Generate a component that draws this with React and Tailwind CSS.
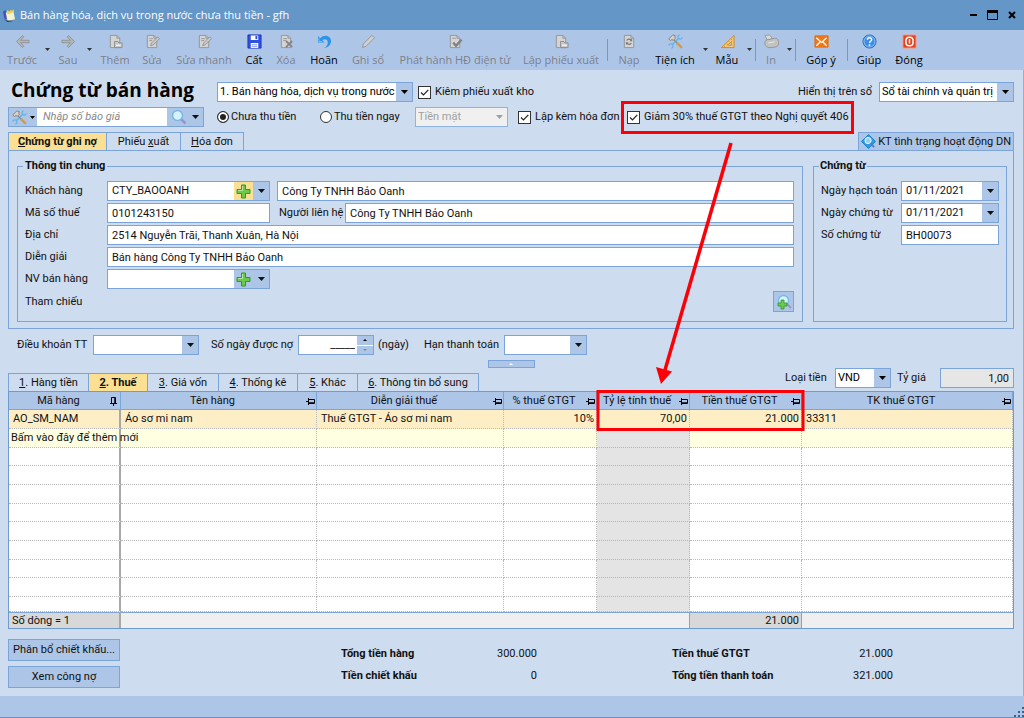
import React, { useState } from 'react';
import clsx from 'clsx';

const Caret = ({ className = '' }) => (
  <svg viewBox="0 0 7 4" className={clsx('w-[7px] h-1 shrink-0', className)} fill="currentColor">
    <path d="M0 0h7L3.5 4z" />
  </svg>
);

const Select = ({ value, className, disabled, id, label }) => (
  <div className={clsx('relative h-5 border', disabled ? 'border-[#8fb3e0] bg-[#f0f0f0]' : 'border-[#7ba4d9] bg-white', className)}>
    <select
      id={id}
      aria-label={label}
      disabled={disabled}
      className={clsx('appearance-none block w-full h-full pl-[2px] pr-4 bg-transparent outline-none text-[11px]', disabled ? 'text-[#a0a0a0]' : 'text-black')}
    >
      <option>{value}</option>
    </select>
    <span className={clsx('absolute right-0 top-0 h-full w-4 flex items-center justify-center pointer-events-none', disabled ? 'text-[#a0a0a0]' : 'bg-[#adc6e8] text-black')}>
      <Caret />
    </span>
  </div>
);

const TextInput = ({ value, className, ...rest }) => (
  <input
    type="text"
    defaultValue={value}
    className={clsx('h-5 min-w-0 border border-[#7ba4d9] bg-white px-1 text-[11px] outline-none', className)}
    {...rest}
  />
);

const PlusIcon = () => (
  <svg viewBox="0 0 15 15" className="w-[15px] h-[15px]">
    <path d="M5.500 1h4v4.500h4.500v4h-4.500v4.500h-4v-4.500h-4.500v-4h4.500z" fill="#6cc94c" stroke="#2d9a24" />
    <path d="M6.500 2v4.500h-4.500" fill="none" stroke="#b5eb9c" />
  </svg>
);

const Combo = ({ id, value, plus, active, label, className }) => (
  <div className={clsx('flex h-5 border border-[#7ba4d9] bg-white', className)}>
    <input id={id} type="text" aria-label={label} defaultValue={value} className="flex-1 min-w-0 px-1 text-[11px] outline-none" />
    {plus && (
      <button aria-label="+" className={clsx('w-[19px] flex items-center justify-center', active ? 'bg-[#fbdf92]' : 'bg-[#adc6e8]')}>
        <PlusIcon />
      </button>
    )}
    <button aria-label="▾" className="w-4 bg-[#adc6e8] flex items-center justify-center"><Caret /></button>
  </div>
);

const Check = ({ children, className }) => (
  <label className={clsx('flex items-center gap-1 whitespace-nowrap', className)}>
    <span className="relative flex">
      <input type="checkbox" defaultChecked className="peer appearance-none w-[13px] h-[13px] border border-[#333] bg-white" />
      <svg viewBox="0 0 13 13" className="absolute inset-0 w-[13px] h-[13px] hidden peer-checked:block pointer-events-none" fill="none" stroke="#222" strokeWidth="1.2">
        <path d="M3 6.500l2.500 2.500L10.300 3.800" />
      </svg>
    </span>
    {children}
  </label>
);

const Radio = ({ children, checked, className }) => (
  <label className={clsx('flex items-center gap-[2px] whitespace-nowrap', className)}>
    <input
      type="radio"
      name="payment"
      defaultChecked={checked}
      className="appearance-none w-3 h-3 rounded-full border border-[#333] bg-white checked:bg-[#222] checked:shadow-[inset_0_0_0_2px_white]"
    />
    {children}
  </label>
);

/* ---------- toolbar icons ---------- */

const Page = ({ children, fill = '#d4d4d4', stroke = '#949494' }) => (
  <>
    <path d="M2.500 1.500h7l3 3v10h-10z" fill={fill} stroke={stroke} />
    <path d="M9.500 1.500v3h3" fill="none" stroke={stroke} />
    {children}
  </>
);

const ToolsArt = () => (
  <>
    <path d="M4.500 11.500L11.500 4.500" stroke="#5fb2ec" strokeWidth="1.500" />
    <path d="M15.200 3.500a2.300 2.300 0 1 1-2.700-2.700M.8 12.500a2.300 2.300 0 1 1 2.700 2.700" fill="none" stroke="#5fb2ec" strokeWidth="1.300" />
    <path d="M10 10l4 4" stroke="#d99a3c" strokeWidth="2.600" strokeLinecap="round" />
    <path d="M5.500 5.500l4 4" stroke="#9c8a70" strokeWidth="1.400" />
    <path d="M.8 5.200L5.200 1l2.600.8-.6 1.400.5 1.500-2 2-1.500-.8-1.600 1z" fill="#d8d2c8" stroke="#77706a" strokeWidth=".8" />
  </>
);

const art = {
  back: <path d="M8 1.500L1.500 8 8 14.500 9.500 13 6 9.300h9V6.700H6L9.500 3z" fill="#b5b5b5" stroke="#8a8a8a" strokeWidth=".8" />,
  next: <path d="M8 1.500L14.500 8 8 14.500 6.500 13 10 9.300H1V6.700h9L6.500 3z" fill="#b5b5b5" stroke="#8a8a8a" strokeWidth=".8" />,
  add: <Page><path d="M7 8h3.500l1 1.500H15v5H7z" fill="#c9c9c9" stroke="#8d8d8d" /><path d="M8.500 12h5" stroke="#f2f2f2" strokeWidth="1.500" /></Page>,
  edit: <Page><path d="M4.500 5h4M4.500 7h3" stroke="#999" /><path d="M6 12.500l1-3L13.500 3l2 2L9 11.500z" fill="#c7c7c7" stroke="#8a8a8a" strokeWidth=".8" /></Page>,
  save: (
    <>
      <path d="M1 1h14v14H1z" fill="#3050e0" stroke="#1f35b5" />
      <path d="M4 1.500h8v5H4zM4 9.500h8V15H4z" fill="#fff" />
      <path d="M9 2h2v3.500H9z" fill="#3050e0" />
      <path d="M5 11.500h6M5 13.500h6" stroke="#7e91f0" />
    </>
  ),
  remove: <Page><path d="M4.500 5h4M4.500 7h3" stroke="#999" /><path d="M7.500 7.500l6.500 6.500M14 7.500L7.500 14" stroke="#858585" strokeWidth="2" /></Page>,
  undo: (
    <>
      <path d="M1 2v7h7L5.700 6.700C8 4.800 11.500 5.500 11.500 9c0 2.500-1.500 4.500-4 6 4-.6 7.500-3.200 7.500-7.300C15 2.500 8.500-.5 3.500 4.500z" fill="#2b94ea" />
      <path d="M2 4v4h3.500" fill="none" stroke="#7cc3fa" />
    </>
  ),
  pen: <path d="M1.500 14.500l1.200-4L11.500 1.500l3 2.500L5.500 13z" fill="#d0d0d0" stroke="#949494" />,
  issue: <Page><path d="M5.500 9l3 3.500 6-6.500" fill="none" stroke="#808080" strokeWidth="2.400" /><path d="M4.500 4.500h4" stroke="#999" /></Page>,
  reload: <Page><path d="M5 7c1-2 4-2 5 0M10 9.500c-1 2-4 2-5 0" fill="none" stroke="#777" strokeWidth="1.200" /><path d="M10.800 4.800v3H8zM4.200 11.800v-3H7z" fill="#777" /></Page>,
  tools: <ToolsArt />,
  ruler: (
    <>
      <path d="M15 1.500v13H1.500z" fill="#f7c56a" stroke="#d08a2a" />
      <path d="M12.300 8v4H8.200z" fill="#adc6e8" stroke="#d08a2a" strokeWidth=".8" />
      <path d="M4.500 13l1 1M7 10.500l1 1M9.500 8l1 1M12 5.500l1 1" stroke="#b87420" strokeWidth=".7" />
    </>
  ),
  print: (
    <>
      <path d="M1 1.500l5-.5 3 4-5.500 1.500z" fill="#d9d9d9" stroke="#9a9a9a" />
      <path d="M1 9c0-2.200 2-3 3.500-3l7-1.500c2.200 0 4 1.500 4 3.500v2.500c0 2-2 3.300-4 3.500l-5 .6c-3 0-5.500-1.800-5.500-3.800z" fill="#c2c2c2" stroke="#949494" />
      <path d="M4.500 9.500l7-1.200" stroke="#e8e8e8" />
    </>
  ),
  mail: <><path d="M1 2h14v12H1z" fill="#f07818" stroke="#e06a0d" /><path d="M2.500 4L8 9l5.500-5M2.500 12.500l4-4M13.500 12.500l-4-4" fill="none" stroke="#fff" strokeWidth="1.300" /></>,
  help: <><circle cx="8" cy="8" r="7" fill="#3d8ee4" stroke="#2668b8" /><circle cx="8" cy="8" r="5.900" fill="none" stroke="#b9dcfb" strokeWidth=".7" /><path d="M5.800 6.200c0-3 4.600-2.800 4.500-.2 0 1.700-2.200 1.700-2.200 3.500M8 11v1.700" fill="none" stroke="#fff" strokeWidth="1.600" /></>,
  close: <><path d="M1 1h14v14H1z" fill="#e3431f" stroke="#f5a08d" /><rect x="4.200" y="3.500" width="7.600" height="9" rx="3.500" fill="none" stroke="#fff" strokeWidth="1.600" /><path d="M8 5.500v4.500" stroke="#fff" strokeWidth="1.600" /></>,
};

const tools = [
  { text: 'Trước', icon: 'back', off: true, w: 'w-[42px]', menu: true },
  { text: 'Sau', icon: 'next', off: true, w: 'w-[34px]', menu: true },
  { text: 'Thêm', icon: 'add', off: true, w: 'w-11' },
  { text: 'Sửa', icon: 'edit', off: true, w: 'w-[30px]' },
  { text: 'Sửa nhanh', icon: 'edit', off: true, w: 'w-[74px]' },
  { text: 'Cất', icon: 'save', w: 'w-[26px]' },
  { text: 'Xóa', icon: 'remove', off: true, w: 'w-[38px]' },
  { text: 'Hoãn', icon: 'undo', w: 'w-[38px]' },
  { text: 'Ghi sổ', icon: 'pen', off: true, w: 'w-[50px]' },
  { text: 'Phát hành HĐ điện tử', icon: 'issue', off: true, w: 'w-[124px]' },
  { text: 'Lập phiếu xuất', icon: 'add', off: true, w: 'w-[88px]', sep: true },
  { text: 'Nạp', icon: 'reload', off: true, w: 'w-10' },
  { text: 'Tiện ích', icon: 'tools', w: 'w-[52px]', menu: true },
  { text: 'Mẫu', icon: 'ruler', w: 'w-9', menu: true, sep: true },
  { text: 'In', icon: 'print', off: true, w: 'w-7', menu: true, sep: true },
  { text: 'Góp ý', icon: 'mail', w: 'w-12', sep: true },
  { text: 'Giúp', icon: 'help', w: 'w-10' },
  { text: 'Đóng', icon: 'close', w: 'w-10' },
];

const Toolbar = () => (
  <nav className="flex h-10 bg-[#adc6e8] pl-px font-['Open_Sans','Noto_Sans',sans-serif]">
    {tools.map(t => (
      <React.Fragment key={t.text}>
        <button disabled={t.off} className={clsx('flex flex-col items-center pt-1 whitespace-nowrap text-[11px]', t.w, t.off ? 'text-[#7d8088]' : 'text-black')}>
          <svg viewBox="0 0 16 16" className="w-[15px] h-[15px] shrink-0">{art[t.icon]}</svg>
          <span className="leading-4 mt-[3px]">{t.text}</span>
        </button>
        {t.menu && <span className="w-2 flex justify-center pt-[18px] text-[#333]"><svg viewBox="0 0 5 3" className="w-[5px] h-[3px]" fill="currentColor"><path d="M0 0h5L2.500 3z" /></svg></span>}
        {t.sep && <span className="w-1 flex justify-center py-[9px]"><i className="w-px bg-[#6d9bd6]" /></span>}
      </React.Fragment>
    ))}
  </nav>
);

const TitleBar = () => (
  <header className="flex items-center h-[30px] px-[3px] bg-[#6496c8] text-white font-['Open_Sans','Noto_Sans',sans-serif]">
    <svg viewBox="0 0 14 14" className="w-[13px] h-[13px] mr-1">
      <path d="M0 3l3-2 1 9-2 2z" fill="#4b4bc0" />
      <path d="M3 4l8-2 2 9-8 2z" fill="#f6f3d0" />
      <path d="M4 3l1-2 2 2 1-2 2 1 1-2 1 3-7 3z" fill="#f2d24a" />
      <path d="M2 12l9 1-6 1z" fill="#334" />
    </svg>
    <span className="flex-1 text-[11px]">Bán hàng hóa, dịch vụ trong nước chưa thu tiền - gfh</span>
    <div className="flex items-center gap-[9px] text-black mr-1">
      <button aria-label="–"><svg viewBox="0 0 10 10" className="w-[10px] h-[10px]"><path d="M2 5h7" stroke="currentColor" strokeWidth="2" /></svg></button>
      <button aria-label="□"><svg viewBox="0 0 11 10" className="w-[11px] h-[10px]"><path d="M.5 1v8.500h10V1" fill="none" stroke="currentColor" /><path d="M0 1.500h11" stroke="currentColor" strokeWidth="3" /></svg></button>
      <button aria-label="×"><svg viewBox="0 0 10 10" className="w-[10px] h-[10px]"><path d="M2 2l6 6M8 2L2 8" stroke="currentColor" strokeWidth="2" /></svg></button>
    </div>
  </header>
);

const Tab = ({ k, before = '', after, active, onClick, className }) => (
  <button
    onClick={onClick}
    className={clsx('h-[18px] border-t border-r border-[#7ba4d9] whitespace-nowrap', active ? 'bg-[#fbdf92] font-bold' : 'bg-[#cddcee]', className)}
  >
    {before}<u>{k}</u>{after}
  </button>
);

const Heading = () => (
  <section className="flex pt-3">
    <div className="w-[209px] shrink-0">
      <h1 className="h-5 pl-[3px] text-[19px] leading-4 font-bold text-black whitespace-nowrap font-['Open_Sans','Noto_Sans',sans-serif]">Chứng từ bán hàng</h1>
      <div className="mt-[5px] flex w-[196px] h-5 border border-[#7ba4d9] bg-[#adc6e8]">
        <button aria-label="Tiện ích" className="w-7 flex items-center justify-center gap-[3px]">
          <svg viewBox="0 0 16 16" className="w-[15px] h-[15px]"><ToolsArt /></svg>
          <svg viewBox="0 0 5 3" className="w-[5px] h-[3px]"><path d="M0 0h5L2.500 3z" /></svg>
        </button>
        <input type="text" aria-label="Nhập số báo giá" placeholder="Nhập số báo giá" className="flex-1 min-w-0 bg-white pl-[6px] text-[11px] italic outline-none placeholder:text-[#888]" />
        <button aria-label="Tìm" className="w-9 flex items-center justify-center gap-[5px]">
          <svg viewBox="0 0 16 16" className="w-4 h-4">
            <path d="M10 10l4.500 4.500" stroke="#9a95c9" strokeWidth="2.500" />
            <circle cx="6.500" cy="6.500" r="5" fill="#d8f2fd" stroke="#73b9e6" strokeWidth="1.500" />
          </svg>
          <Caret />
        </button>
      </div>
    </div>
    <div className="flex-1 min-w-0">
      <div className="flex items-center h-5">
        <Select label="Loại chứng từ" value="1. Bán hàng hóa, dịch vụ trong nước" className="w-[196px] mr-[5px]" />
        <Check>Kiêm phiếu xuất kho</Check>
        <label htmlFor="book" className="ml-auto mr-[7px]">Hiển thị trên sổ</label>
        <Select id="book" value="Sổ tài chính và quản trị" className="w-[135px]" />
      </div>
      <div className="flex items-center h-5 mt-[5px]">
        <Radio checked className="w-[103px]">Chưa thu tiền</Radio>
        <Radio className="w-[95px]">Thu tiền ngay</Radio>
        <Select disabled label="Hình thức" value="Tiền mặt" className="w-[93px] mr-[10px]" />
        <Check className="w-[103px]">Lập kèm hóa đơn</Check>
        <Check className="h-[33px] shrink-0 border-[3px] border-[#fb0007] pl-[3px] pr-[2px]">Giảm 30% thuế GTGT theo Nghị quyết 406</Check>
      </div>
    </div>
  </section>
);

const General = () => (
  <fieldset className="flex-1 min-w-0 border border-[#7ba4d9] pl-[7px] pr-2 pt-[7px] pb-[9px]">
    <legend className="ml-[-2px] px-[2px] font-bold leading-4">Thông tin chung</legend>
    <div className="grid grid-cols-[82px_1fr] items-center gap-y-[2px]">
      <label htmlFor="customer">Khách hàng</label>
      <div className="flex gap-[7px]">
        <Combo id="customer" value="CTY_BAOOANH" plus active className="w-[163px]" />
        <TextInput value="Công Ty TNHH Bảo Oanh" aria-label="Tên khách hàng" className="flex-1" />
      </div>
      <label htmlFor="tax">Mã số thuế</label>
      <div className="flex items-center">
        <TextInput id="tax" value="0101243150" className="w-[163px]" />
        <label htmlFor="contact" className="w-[75px] pl-[9px] whitespace-nowrap">Người liên hệ</label>
        <TextInput id="contact" value="Công Ty TNHH Bảo Oanh" className="flex-1" />
      </div>
      <label htmlFor="address">Địa chỉ</label>
      <TextInput id="address" value="2514 Nguyễn Trãi, Thanh Xuân, Hà Nội" />
      <label htmlFor="memo">Diễn giải</label>
      <TextInput id="memo" value="Bán hàng Công Ty TNHH Bảo Oanh" />
      <label htmlFor="seller">NV bán hàng</label>
      <Combo id="seller" value="" plus className="w-[163px]" />
      <span>Tham chiếu</span>
      <button aria-label="Tham chiếu" className="justify-self-end w-[21px] h-[21px] border border-[#7ba4d9] bg-[#adc6e8] flex items-center justify-center">
        <svg viewBox="0 0 16 16" className="w-4 h-4">
          <path d="M11 10l4 4" stroke="#9a95c9" strokeWidth="2" />
          <circle cx="7.500" cy="6.500" r="5" fill="#d8f2fd" stroke="#73b9e6" strokeWidth="1.300" />
          <path d="M5 6h3v3h3v3H8v3H5v-3H2V9h3z" fill="#6cc94c" stroke="#2d9a24" strokeWidth=".8" />
        </svg>
      </button>
    </div>
  </fieldset>
);

const Voucher = () => (
  <fieldset className="w-[192px] shrink-0 border border-[#7ba4d9] px-[7px] pt-[7px]">
    <legend className="ml-[-2px] px-px font-bold leading-4">Chứng từ</legend>
    <div className="grid grid-cols-[80px_98px] items-center gap-y-[2px]">
      <label htmlFor="posted">Ngày hạch toán</label>
      <Combo id="posted" value="01/11/2021" />
      <label htmlFor="dated">Ngày chứng từ</label>
      <Combo id="dated" value="01/11/2021" />
      <label htmlFor="number">Số chứng từ</label>
      <TextInput id="number" value="BH00073" />
    </div>
  </fieldset>
);

const Terms = () => (
  <section className="flex items-center h-5 mt-[6px] pl-[9px]">
    <label htmlFor="terms" className="w-[76px]">Điều khoản TT</label>
    <Combo id="terms" className="w-[106px] mr-3" />
    <label htmlFor="days" className="w-[87px]">Số ngày được nợ</label>
    <div className="flex w-[76px] h-5 border border-[#7ba4d9] bg-white">
      <input id="days" type="text" defaultValue="_____" className="flex-1 min-w-0 text-right pr-[2px] text-[11px] outline-none" />
      <div className="w-4 flex flex-col gap-px">
        <button aria-label="▴" className="flex-1 bg-[#adc6e8] flex items-center justify-center"><svg viewBox="0 0 4 2" className="w-1 h-[2px]"><path d="M0 2h4L2 0z" /></svg></button>
        <button aria-label="▾" className="flex-1 bg-[#adc6e8] flex items-center justify-center"><svg viewBox="0 0 4 2" className="w-1 h-[2px]"><path d="M0 0h4L2 2z" fill="#888" /></svg></button>
      </div>
    </div>
    <span className="w-[50px] pl-1">(ngày)</span>
    <label htmlFor="due" className="w-20">Hạn thanh toán</label>
    <Combo id="due" className="w-[83px]" />
  </section>
);

const Pin = ({ down }) => (
  <svg viewBox="0 0 9 9" className={clsx('absolute right-px top-[5px] w-[9px] h-[9px]', down && 'mr-px')} fill="none" stroke="#000">
    {down
      ? <><path d="M2.500 6V.5h4V6M1 6.500h7M4.500 7v2" /><path d="M6 1v5" strokeWidth="1.500" /></>
      : <><path d="M3 2.500h5.500v4H3M2.500 1v7M0 4.500h2" /><path d="M3 6h5" strokeWidth="1.500" /></>}
  </svg>
);

const columns = [
  { title: 'Mã hàng', w: 'w-28' },
  { title: 'Tên hàng', w: 'w-[196px]' },
  { title: 'Diễn giải thuế', w: 'w-[187px]' },
  { title: '% thuế GTGT', w: 'w-[93px]' },
  { title: 'Tỷ lệ tính thuế', w: 'w-[93px]' },
  { title: 'Tiền thuế GTGT', w: 'w-28' },
  { title: 'TK thuế GTGT', w: '' },
];

const item = ['AO_SM_NAM', 'Áo sơ mi nam', 'Thuế GTGT - Áo sơ mi nam', '10%', '70,00', '21.000', '33311'];

const cell = i => clsx(
  'border-b border-r border-dotted border-b-[#b8b8b8] p-0 whitespace-nowrap leading-4',
  i === 0 ? 'border-r-2 [border-right-style:solid] border-r-[#a8a8a8]' : 'border-r-[#b8b8b8]',
);

const Grid = () => (
  <table className="w-full table-fixed border-separate border-spacing-0 border border-[#6f9bd3] bg-white">
    <thead>
      <tr className="h-[18px]">
        {columns.map((c, i) => (
          <th key={c.title} className={clsx('relative p-0 pr-3 font-normal whitespace-nowrap leading-4 bg-[#adc6e8] border-r border-b border-[#7ba4d9]', c.w)}>
            {c.title}
            <Pin down={i === 0} />
          </th>
        ))}
      </tr>
    </thead>
    <tbody>
      <tr className="h-[19px] bg-[#feeec6]">
        {item.map((v, i) => (
          <td key={i} className={clsx(cell(i), i > 2 && i < 6 ? 'text-right pr-[2px]' : 'pl-1')}>{v}</td>
        ))}
      </tr>
      <tr className="h-[19px] bg-[#ffffe1]">
        {item.map((v, i) => (
          <td key={i} className={clsx(cell(i), i === 4 && 'bg-[#e4e4e4]')}>
            {i === 0 && <span className="pl-[2px]">Bấm vào đây để thêm mới</span>}
          </td>
        ))}
      </tr>
      {Array.from({ length: 9 }, (_, r) => (
        <tr key={r} className={clsx(r === 8 ? 'h-[15px]' : r % 3 === 0 ? 'h-[18px]' : 'h-[19px]')}>
          {columns.map((c, i) => <td key={i} className={clsx(cell(i), i === 4 && 'bg-[#e4e4e4]')} />)}
        </tr>
      ))}
    </tbody>
    <tfoot>
      <tr className="h-4 bg-[#efefef]">
        <td className="p-0 pl-[3px] leading-[15px] bg-[#d8d8d8] border-t border-[#7ba4d9] border-r-2 border-r-[#a8a8a8]">Số dòng = 1</td>
        <td colSpan={4} className="p-0 border-t border-r border-[#7ba4d9]" />
        <td className="p-0 pr-[2px] leading-[15px] text-right bg-[#d8d8d8] border-t border-r border-[#7ba4d9]">21.000</td>
        <td className="p-0 border-t border-[#7ba4d9]" />
      </tr>
    </tfoot>
  </table>
);

const Totals = () => (
  <section className="flex mt-[10px] pb-2">
    <div className="flex flex-col gap-[5px] w-28">
      <button className="h-[22px] border border-[#7ba4d9] bg-[#adc6e8]">Phân bổ chiết khấu...</button>
      <button className="h-[22px] border border-[#7ba4d9] bg-[#adc6e8]">Xem công nợ</button>
    </div>
    <dl className="ml-[221px] pt-1 grid grid-cols-[130px_66px_135px_130px_91px] auto-rows-[22px] items-center [&>dd]:text-right [&>dt]:font-bold [&>dt]:whitespace-nowrap">
      <dt>Tổng tiền hàng</dt>
      <dd>300.000</dd>
      <dt className="col-start-4">Tiền thuế GTGT</dt>
      <dd>21.000</dd>
      <dt>Tiền chiết khấu</dt>
      <dd>0</dd>
      <dt className="col-start-4">Tổng tiền thanh toán</dt>
      <dd>321.000</dd>
    </dl>
  </section>
);

const detailTabs = [
  ['1', '. Hàng tiền', 'w-[81px] border-l'],
  ['2', '. Thuế', 'w-[59px]'],
  ['3', '. Giá vốn', 'w-[71px]'],
  ['4', '. Thống kê', 'w-[79px]'],
  ['5', '. Khác', 'w-[60px]'],
  ['6', '. Thông tin bổ sung', 'w-[121px]'],
];

export default function App() {
  const [mainTab, setMainTab] = useState(0);
  const [detailTab, setDetailTab] = useState(1);

  return (
    <div className="relative flex flex-col min-h-screen bg-[#cddcee] text-[11px] leading-4 text-[#111] font-[Roboto,'Liberation_Sans',Arial,sans-serif]">
      <TitleBar />
      <Toolbar />
      <main className="flex-1 pl-2 pr-[9px] border-r border-[#8db0dc]">
        <Heading />

        <div className="flex mt-[5px]">
          <Tab className="w-[99px] border-l" k="C" after="hứng từ ghi nợ" active={mainTab === 0} onClick={() => setMainTab(0)} />
          <Tab className="w-[74px]" before="Phiếu " k="x" after="uất" active={mainTab === 1} onClick={() => setMainTab(1)} />
          <Tab className="w-[63px]" k="H" after="óa đơn" active={mainTab === 2} onClick={() => setMainTab(2)} />
          <button className="ml-auto h-[18px] flex items-center gap-[2px] px-[2px] whitespace-nowrap bg-[#adc6e8] border border-b-0 border-[#7ba4d9]">
            <svg viewBox="0 0 16 16" className="w-[15px] h-[15px] shrink-0">
              <path d="M8 .5L15.500 8 8 15.500.5 8z" fill="#2c9be8" stroke="#1b7fcb" />
              <circle cx="7.500" cy="7" r="3.300" fill="#8fd0f7" stroke="#fff" />
              <path d="M10 9.500l4 4.500" stroke="#4d7fb8" strokeWidth="2" />
            </svg>
            KT tình trạng hoạt động DN
          </button>
        </div>

        <div className="flex gap-[10px] border border-[#7ba4d9] pl-2 pr-[6px] pt-[7px] pb-[6px]">
          <General />
          <Voucher />
        </div>

        <Terms />

        <button aria-label="▴" className="mt-[5px] mx-auto flex items-center justify-center w-[47px] h-2 border border-[#7ba4d9] bg-[#adc6e8]">
          <svg viewBox="0 0 4 2" className="w-1 h-[2px]"><path d="M0 2h4L2 0z" fill="#fff" /></svg>
        </button>

        <div className="flex h-[23px]">
          <div className="flex items-end">
            {detailTabs.map(([k, text, w], i) => (
              <Tab key={k} className={w} k={k} after={text} active={detailTab === i} onClick={() => setDetailTab(i)} />
            ))}
          </div>
          <div className="ml-auto flex items-center h-5">
            <label htmlFor="currency" className="w-[50px] whitespace-nowrap">Loại tiền</label>
            <Select id="currency" value="VND" className="w-14" />
            <label htmlFor="rate" className="w-[49px] pl-[6px]">Tỷ giá</label>
            <TextInput id="rate" value="1,00" className="w-[74px] text-right bg-[#e6e6e6]!" />
          </div>
        </div>

        <Grid />
        <Totals />
      </main>

      <footer className="h-[22px] bg-[#adc6e8] border-b border-[#6496c8] flex items-end justify-end">
        <svg viewBox="0 0 10 10" className="w-[10px] h-[10px]" fill="#3f5f8c">
          <path d="M8 0h2v2H8zM4 4h2v2H4zM8 4h2v2H8zM0 8h2v2H0zM4 8h2v2H4zM8 8h2v2H8z" />
        </svg>
      </footer>

      <svg viewBox="0 0 210 290" className="absolute left-[596px] top-[142px] w-[210px] h-[290px] pointer-events-none" fill="none" stroke="#fb0007">
        <path d="M135 1L69 228" strokeWidth="3.500" />
        <path d="M65 242l-5-17 16 4.500z" fill="#fb0007" stroke="none" />
        <path d="M2 249.500h205v38H2z" strokeWidth="3" />
      </svg>
    </div>
  );
}
